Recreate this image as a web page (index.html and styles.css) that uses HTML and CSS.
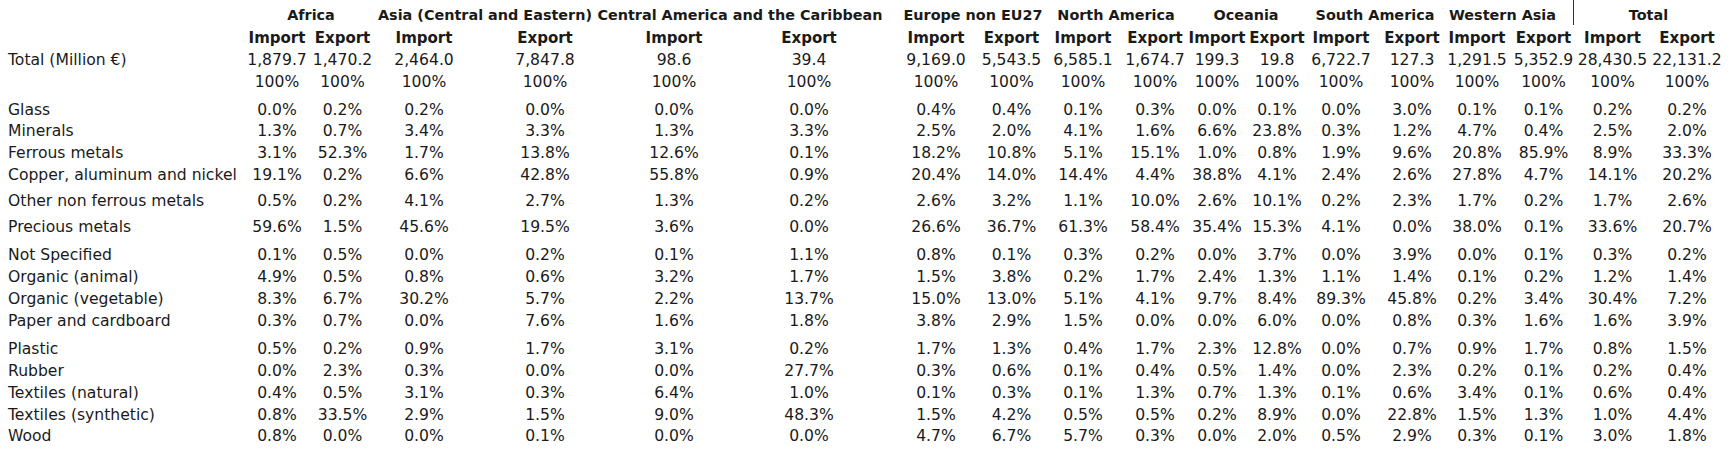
FILE: index.html
```html
<!DOCTYPE html>
<html lang="en">
<head>
<meta charset="utf-8">
<title>Import / Export by material</title>
<link rel="stylesheet" href="styles.css">
</head>
<body>
<div class="sheet">
  <div class="groups">
    <span class="lbl"></span>
    <span>Africa</span>
    <span>Asia (Central and Eastern)</span>
    <span>Central America and the Caribbean</span>
    <span>Europe non EU27</span>
    <span>North America</span>
    <span>Oceania</span>
    <span>South America</span>
    <span>Western Asia</span>
    <span class="g-total">Total</span>
  </div>
  <div class="row subhead">
    <span class="lbl"></span>
    <span>Import</span><span>Export</span>
    <span>Import</span><span>Export</span>
    <span>Import</span><span>Export</span>
    <span>Import</span><span>Export</span>
    <span>Import</span><span>Export</span>
    <span>Import</span><span>Export</span>
    <span>Import</span><span>Export</span>
    <span>Import</span><span>Export</span>
    <span>Import</span><span>Export</span>
  </div>
  <div class="row">
    <span class="lbl">Total (Million €)</span>
    <span>1,879.7</span><span>1,470.2</span><span>2,464.0</span><span>7,847.8</span><span>98.6</span><span>39.4</span><span>9,169.0</span><span>5,543.5</span><span>6,585.1</span><span>1,674.7</span><span>199.3</span><span>19.8</span><span>6,722.7</span><span>127.3</span><span>1,291.5</span><span>5,352.9</span><span>28,430.5</span><span>22,131.2</span>
  </div>
  <div class="row">
    <span class="lbl"></span>
    <span>100%</span><span>100%</span><span>100%</span><span>100%</span><span>100%</span><span>100%</span><span>100%</span><span>100%</span><span>100%</span><span>100%</span><span>100%</span><span>100%</span><span>100%</span><span>100%</span><span>100%</span><span>100%</span><span>100%</span><span>100%</span>
  </div>
  <div class="row gap6 tight">
    <span class="lbl">Glass</span>
    <span>0.0%</span><span>0.2%</span><span>0.2%</span><span>0.0%</span><span>0.0%</span><span>0.0%</span><span>0.4%</span><span>0.4%</span><span>0.1%</span><span>0.3%</span><span>0.0%</span><span>0.1%</span><span>0.0%</span><span>3.0%</span><span>0.1%</span><span>0.1%</span><span>0.2%</span><span>0.2%</span>
  </div>
  <div class="row">
    <span class="lbl">Minerals</span>
    <span>1.3%</span><span>0.7%</span><span>3.4%</span><span>3.3%</span><span>1.3%</span><span>3.3%</span><span>2.5%</span><span>2.0%</span><span>4.1%</span><span>1.6%</span><span>6.6%</span><span>23.8%</span><span>0.3%</span><span>1.2%</span><span>4.7%</span><span>0.4%</span><span>2.5%</span><span>2.0%</span>
  </div>
  <div class="row">
    <span class="lbl">Ferrous metals</span>
    <span>3.1%</span><span>52.3%</span><span>1.7%</span><span>13.8%</span><span>12.6%</span><span>0.1%</span><span>18.2%</span><span>10.8%</span><span>5.1%</span><span>15.1%</span><span>1.0%</span><span>0.8%</span><span>1.9%</span><span>9.6%</span><span>20.8%</span><span>85.9%</span><span>8.9%</span><span>33.3%</span>
  </div>
  <div class="row">
    <span class="lbl">Copper, aluminum and nickel</span>
    <span>19.1%</span><span>0.2%</span><span>6.6%</span><span>42.8%</span><span>55.8%</span><span>0.9%</span><span>20.4%</span><span>14.0%</span><span>14.4%</span><span>4.4%</span><span>38.8%</span><span>4.1%</span><span>2.4%</span><span>2.6%</span><span>27.8%</span><span>4.7%</span><span>14.1%</span><span>20.2%</span>
  </div>
  <div class="row gap4">
    <span class="lbl">Other non ferrous metals</span>
    <span>0.5%</span><span>0.2%</span><span>4.1%</span><span>2.7%</span><span>1.3%</span><span>0.2%</span><span>2.6%</span><span>3.2%</span><span>1.1%</span><span>10.0%</span><span>2.6%</span><span>10.1%</span><span>0.2%</span><span>2.3%</span><span>1.7%</span><span>0.2%</span><span>1.7%</span><span>2.6%</span>
  </div>
  <div class="row gap4">
    <span class="lbl">Precious metals</span>
    <span>59.6%</span><span>1.5%</span><span>45.6%</span><span>19.5%</span><span>3.6%</span><span>0.0%</span><span>26.6%</span><span>36.7%</span><span>61.3%</span><span>58.4%</span><span>35.4%</span><span>15.3%</span><span>4.1%</span><span>0.0%</span><span>38.0%</span><span>0.1%</span><span>33.6%</span><span>20.7%</span>
  </div>
  <div class="row gap6">
    <span class="lbl">Not Specified</span>
    <span>0.1%</span><span>0.5%</span><span>0.0%</span><span>0.2%</span><span>0.1%</span><span>1.1%</span><span>0.8%</span><span>0.1%</span><span>0.3%</span><span>0.2%</span><span>0.0%</span><span>3.7%</span><span>0.0%</span><span>3.9%</span><span>0.0%</span><span>0.1%</span><span>0.3%</span><span>0.2%</span>
  </div>
  <div class="row">
    <span class="lbl">Organic (animal)</span>
    <span>4.9%</span><span>0.5%</span><span>0.8%</span><span>0.6%</span><span>3.2%</span><span>1.7%</span><span>1.5%</span><span>3.8%</span><span>0.2%</span><span>1.7%</span><span>2.4%</span><span>1.3%</span><span>1.1%</span><span>1.4%</span><span>0.1%</span><span>0.2%</span><span>1.2%</span><span>1.4%</span>
  </div>
  <div class="row">
    <span class="lbl">Organic (vegetable)</span>
    <span>8.3%</span><span>6.7%</span><span>30.2%</span><span>5.7%</span><span>2.2%</span><span>13.7%</span><span>15.0%</span><span>13.0%</span><span>5.1%</span><span>4.1%</span><span>9.7%</span><span>8.4%</span><span>89.3%</span><span>45.8%</span><span>0.2%</span><span>3.4%</span><span>30.4%</span><span>7.2%</span>
  </div>
  <div class="row">
    <span class="lbl">Paper and cardboard</span>
    <span>0.3%</span><span>0.7%</span><span>0.0%</span><span>7.6%</span><span>1.6%</span><span>1.8%</span><span>3.8%</span><span>2.9%</span><span>1.5%</span><span>0.0%</span><span>0.0%</span><span>6.0%</span><span>0.0%</span><span>0.8%</span><span>0.3%</span><span>1.6%</span><span>1.6%</span><span>3.9%</span>
  </div>
  <div class="row gap6">
    <span class="lbl">Plastic</span>
    <span>0.5%</span><span>0.2%</span><span>0.9%</span><span>1.7%</span><span>3.1%</span><span>0.2%</span><span>1.7%</span><span>1.3%</span><span>0.4%</span><span>1.7%</span><span>2.3%</span><span>12.8%</span><span>0.0%</span><span>0.7%</span><span>0.9%</span><span>1.7%</span><span>0.8%</span><span>1.5%</span>
  </div>
  <div class="row">
    <span class="lbl">Rubber</span>
    <span>0.0%</span><span>2.3%</span><span>0.3%</span><span>0.0%</span><span>0.0%</span><span>27.7%</span><span>0.3%</span><span>0.6%</span><span>0.1%</span><span>0.4%</span><span>0.5%</span><span>1.4%</span><span>0.0%</span><span>2.3%</span><span>0.2%</span><span>0.1%</span><span>0.2%</span><span>0.4%</span>
  </div>
  <div class="row">
    <span class="lbl">Textiles (natural)</span>
    <span>0.4%</span><span>0.5%</span><span>3.1%</span><span>0.3%</span><span>6.4%</span><span>1.0%</span><span>0.1%</span><span>0.3%</span><span>0.1%</span><span>1.3%</span><span>0.7%</span><span>1.3%</span><span>0.1%</span><span>0.6%</span><span>3.4%</span><span>0.1%</span><span>0.6%</span><span>0.4%</span>
  </div>
  <div class="row tight">
    <span class="lbl">Textiles (synthetic)</span>
    <span>0.8%</span><span>33.5%</span><span>2.9%</span><span>1.5%</span><span>9.0%</span><span>48.3%</span><span>1.5%</span><span>4.2%</span><span>0.5%</span><span>0.5%</span><span>0.2%</span><span>8.9%</span><span>0.0%</span><span>22.8%</span><span>1.5%</span><span>1.3%</span><span>1.0%</span><span>4.4%</span>
  </div>
  <div class="row">
    <span class="lbl">Wood</span>
    <span>0.8%</span><span>0.0%</span><span>0.0%</span><span>0.1%</span><span>0.0%</span><span>0.0%</span><span>4.7%</span><span>6.7%</span><span>5.7%</span><span>0.3%</span><span>0.0%</span><span>2.0%</span><span>0.5%</span><span>2.9%</span><span>0.3%</span><span>0.1%</span><span>3.0%</span><span>1.8%</span>
  </div>
</div>
</body>
</html>
```

FILE: styles.css
```css
html, body {
  margin: 0;
  padding: 0;
  background: #ffffff;
}

body {
  font-family: "DejaVu Sans", Verdana, sans-serif;
  color: #1a1a1a;
  overflow: hidden;
}

.sheet {
  padding: 0 8px;
}

.groups {
  display: grid;
  grid-template-columns: 236px 134px 214px 296px 170px 116px 144px 114px 141px 150px;
  height: 25px;
  font-size: 14.4px;
  font-weight: bold;
  line-height: 19px;
}

.groups > span {
  display: flex;
  justify-content: center;
  white-space: nowrap;
  padding-top: 6px;
}

.groups > .g-total {
  border-left: 1px solid #333333;
}

.row {
  display: grid;
  grid-template-columns: 236px 66px 65px 98px 144px 114px 156px 98px 53px 90px 54px 70px 50px 78px 64px 66px 67px 71px 78px;
  height: 22px;
  font-size: 15.6px;
  line-height: 22px;
}

.row > span {
  display: flex;
  justify-content: center;
  white-space: nowrap;
}

.row > .lbl,
.groups > .lbl {
  justify-content: flex-start;
}

.subhead {
  height: 24px;
  padding-top: 3px;
  box-sizing: border-box;
  font-size: 15px;
  font-weight: bold;
  line-height: 21px;
}

.gap4 {
  margin-top: 4px;
}

.gap6 {
  margin-top: 6px;
}

.tight {
  height: 21px;
}
```
